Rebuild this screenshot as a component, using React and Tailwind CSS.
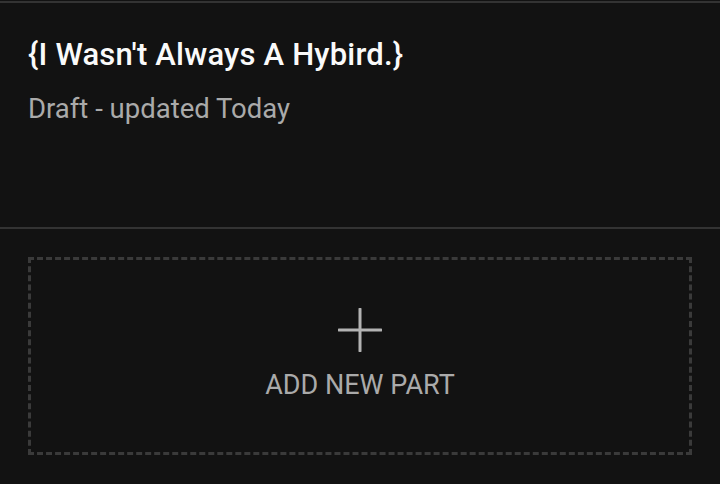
import React from 'react';

const PlusIcon = () => (
  <svg width="44" height="44" viewBox="0 0 44 44" fill="none">
    <path d="M22 1v42M1 22h42" stroke="#b3b3b3" strokeWidth="3" strokeLinecap="round" />
  </svg>
);

const App = () => {
  return (
    <div className="h-[484px] w-[720px] overflow-hidden bg-[#121212] font-['Roboto',sans-serif]">
      <div className="mt-px h-[2px] bg-[#333333]" />
      <div className="h-[224px] px-[28px] pt-[32px]">
        <h1 className="text-[31px] font-medium leading-[40px] tracking-[0.2px] text-[#fafafa]">
          {'{I Wasn\'t Always A Hybird.}'}
        </h1>
        <p className="mt-[18px] text-[27.5px] leading-[32px] text-[#aaaaaa]">Draft - updated Today</p>
      </div>
      <div className="h-[2px] bg-[#333333]" />
      <div className="px-[28px] pt-[28px]">
        <button className="flex h-[198px] w-[664px] flex-col items-center justify-center border-[3px] border-dashed border-[#3a3a3a] pb-[3px]">
          <PlusIcon />
          <span className="mt-[17px] text-[27px] leading-[32px] text-[#aaaaaa]">ADD NEW PART</span>
        </button>
      </div>
    </div>
  );
};

export default App;
